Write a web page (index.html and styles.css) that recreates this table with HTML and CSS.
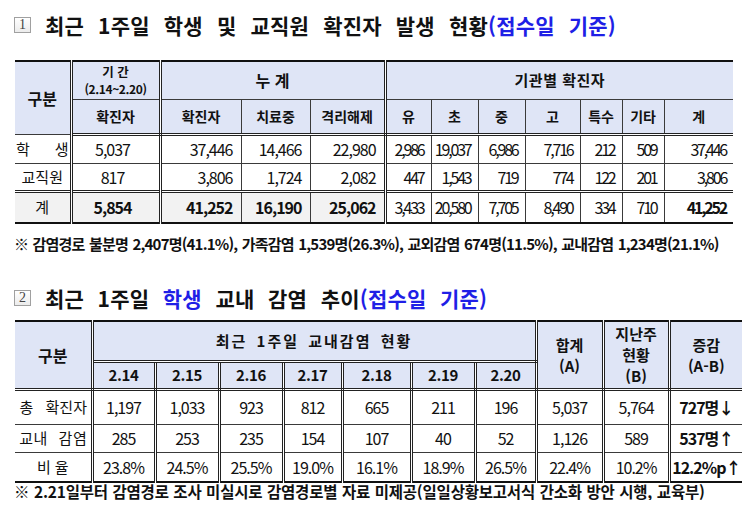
FILE: index.html
```html
<!DOCTYPE html>
<html lang="ko">
<head>
<meta charset="utf-8">
<title>확진자 발생 현황</title>
<link rel="stylesheet" href="styles.css">
</head>
<body>
<div class="page">
  <h2 class="title t1"><span class="numbox">1</span><span class="ttext">최근 1주일 학생 및 교직원 확진자 발생 현황<span class="blue">(접수일 기준)</span></span></h2>

  <table class="tbl tbl1">
    <colgroup>
      <col class="w56"><col class="w89"><col class="w81"><col class="w69"><col class="w75">
      <col class="w46"><col class="w47"><col class="w47"><col class="w55"><col class="w42"><col class="w42"><col class="w69">
    </colgroup>
    <thead>
      <tr class="r-h1">
        <th rowspan="2" class="dr hd-big">구분</th>
        <th class="dr period"><div class="p1">기 간</div><div class="p2">(2.14~2.20)</div></th>
        <th colspan="3" class="dr hd-big">누 계</th>
        <th colspan="7" class="hd-mid">기관별 확진자</th>
      </tr>
      <tr class="r-h2">
        <th class="dr">확진자</th>
        <th>확진자</th><th>치료중</th><th class="dr">격리해제</th>
        <th>유</th><th>초</th><th>중</th><th>고</th><th>특수</th><th>기타</th><th>계</th>
      </tr>
    </thead>
    <tbody>
      <tr class="r-a">
        <td class="dr lbl"><span class="just"><span>학</span><span>생</span></span></td>
        <td class="dr num c">5,037</td>
        <td class="num r">37,446</td><td class="num r">14,466</td><td class="dr num r">22,980</td>
        <td class="num r n">2,986</td><td class="num r n">19,037</td><td class="num r n">6,986</td><td class="num r n">7,716</td><td class="num r n">212</td><td class="num r n">509</td><td class="num r n">37,446</td>
      </tr>
      <tr class="r-b">
        <td class="dr lbl">교직원</td>
        <td class="dr num c">817</td>
        <td class="num r">3,806</td><td class="num r">1,724</td><td class="dr num r">2,082</td>
        <td class="num r n">447</td><td class="num r n">1,543</td><td class="num r n">719</td><td class="num r n">774</td><td class="num r n">122</td><td class="num r n">201</td><td class="num r n">3,806</td>
      </tr>
      <tr class="r-t">
        <td class="dr lbl gray">계</td>
        <td class="dr num c b gray">5,854</td>
        <td class="num r b gray">41,252</td><td class="num r b gray">16,190</td><td class="dr num r b gray">25,062</td>
        <td class="num r n">3,433</td><td class="num r n">20,580</td><td class="num r n">7,705</td><td class="num r n">8,490</td><td class="num r n">334</td><td class="num r n">710</td><td class="num r n b">41,252</td>
      </tr>
    </tbody>
  </table>

  <p class="note note1">※ 감염경로 불분명 2,407명(41.1%), 가족감염 1,539명(26.3%), 교외감염 674명(11.5%), 교내감염 1,234명(21.1%)</p>

  <h2 class="title t2"><span class="numbox">2</span><span class="ttext">최근 1주일 <span class="blue">학생</span> 교내 감염 추이<span class="blue">(접수일 기준)</span></span></h2>

  <table class="tbl tbl2">
    <colgroup>
      <col class="w77"><col class="w63"><col class="w64"><col class="w64"><col class="w59"><col class="w69"><col class="w64"><col class="w61"><col class="w67"><col class="w66"><col class="w73">
    </colgroup>
    <thead>
      <tr class="r2-h1">
        <th rowspan="2" class="hd-big">구분</th>
        <th colspan="7" class="wide">최근 1주일 교내감염 현황</th>
        <th rowspan="2" class="ml">합계<br>(A)</th>
        <th rowspan="2" class="ml ml3">지난주<br>현황<br>(B)</th>
        <th rowspan="2" class="ml">증감<br>(A-B)</th>
      </tr>
      <tr class="r2-h2">
        <th class="dt">2.14</th><th class="dt">2.15</th><th class="dt">2.16</th><th class="dt">2.17</th><th class="dt">2.18</th><th class="dt">2.19</th><th class="dt">2.20</th>
      </tr>
    </thead>
    <tbody>
      <tr class="r2-a">
        <td class="lbl2">총 확진자</td>
        <td class="num">1,197</td><td class="num">1,033</td><td class="num">923</td><td class="num">812</td><td class="num">665</td><td class="num">211</td><td class="num">196</td>
        <td class="num">5,037</td><td class="num">5,764</td><td class="num b">727명↓</td>
      </tr>
      <tr class="r2-b">
        <td class="lbl2 lbl2b">교내 감염</td>
        <td class="num">285</td><td class="num">253</td><td class="num">235</td><td class="num">154</td><td class="num">107</td><td class="num">40</td><td class="num">52</td>
        <td class="num">1,126</td><td class="num">589</td><td class="num b">537명↑</td>
      </tr>
      <tr class="r2-c">
        <td class="lbl2 ratio">비율</td>
        <td class="num">23.8%</td><td class="num">24.5%</td><td class="num">25.5%</td><td class="num">19.0%</td><td class="num">16.1%</td><td class="num">18.9%</td><td class="num">26.5%</td>
        <td class="num">22.4%</td><td class="num">10.2%</td><td class="num b">12.2%p↑</td>
      </tr>
    </tbody>
  </table>

  <p class="note note2">※ 2.21일부터 감염경로 조사 미실시로 감염경로별 자료 미제공(일일상황보고서식 간소화 방안 시행, 교육부)</p>
</div>
</body>
</html>
```

FILE: styles.css
```css
* { box-sizing: border-box; }

body {
  margin: 0;
  background: #ffffff;
  color: #111111;
  font-family: "Noto Sans CJK KR", "Noto Sans", sans-serif;
}

.page {
  width: 745px;
  padding-left: 14px;
}

/* section titles */
.title {
  display: flex;
  align-items: center;
  height: 28px;
  margin: 11px 0 0;
  font-size: 21px;
  font-weight: 700;
  line-height: 28px;
  color: #111;
  white-space: nowrap;
}
.title .ttext { word-spacing: 8px; letter-spacing: 0.2px; }
.t2 { margin-top: 30px; }
.t2 .ttext { word-spacing: 7.5px; }

.numbox {
  display: flex;
  align-items: center;
  justify-content: center;
  width: 17px;
  height: 16px;
  margin-right: 14px;
  border: 1px solid #a0a0a0;
  background: linear-gradient(#ffffff, #ececec);
  font-family: "Liberation Serif", serif;
  font-size: 14px;
  font-weight: 400;
  line-height: 1;
  color: #444;
}

.blue { color: #1f1fe6; }

/* tables */
.tbl {
  margin-left: 1px;
  border-collapse: collapse;
  table-layout: fixed;
  border-top: 2px solid #111;
  border-bottom: 2px solid #111;
  border-left: hidden;
  border-right: hidden;
}
.tbl1 { width: 718px; margin-top: 21px; }
.tbl2 { width: 727px; margin-top: 8px; }

.tbl th,
.tbl td {
  border: 1px solid #3a3a3a;
  padding: 0;
  text-align: center;
  vertical-align: middle;
  white-space: nowrap;
  overflow: hidden;
}

.tbl th {
  background: #dfe5f6;
  font-weight: 700;
  font-size: 14px;
  line-height: 18px;
}

.w42 { width: 42px; } .w46 { width: 46px; } .w47 { width: 47px; }
.w55 { width: 55px; } .w56 { width: 56px; } .w59 { width: 59px; }
.w61 { width: 61px; } .w63 { width: 63px; } .w64 { width: 64px; }
.w66 { width: 66px; } .w67 { width: 67px; } .w69 { width: 69px; }
.w73 { width: 73px; } .w75 { width: 75px; } .w77 { width: 77px; }
.w81 { width: 81px; } .w89 { width: 89px; }

.tbl .dr { border-right: 3px double #222; }

/* table 1 */
.r-h1 { height: 38px; }
.r-h2 { height: 35px; }
.r-h2 th { border-bottom: 3px double #222; }
.r-a { height: 29px; }
.r-b { height: 28px; }
.r-t { height: 32px; }
.r-t td { border-top: 3px double #222; }

.tbl .hd-big { font-size: 16px; }
.tbl .hd-mid { font-size: 15px; letter-spacing: 0.5px; }

.period .p1 { font-size: 12.5px; line-height: 17px; }
.period .p2 { font-size: 12px; line-height: 17px; letter-spacing: -0.4px; }

.tbl td {
  font-size: 15px;
  line-height: 18px;
  font-weight: 400;
}

.tbl .num { font-size: 16px; letter-spacing: -1px; }
.tbl .num.n { letter-spacing: -2.2px; }
.num.c { text-align: center; padding-right: 6px; }
.num.r { text-align: right; padding-right: 8px; }
.num.n.r { padding-right: 7px; }
.tbl .b { font-weight: 700; }
.tbl .gray { background: #f2f2f2; }

.lbl { font-size: 15px; padding: 0 4px; }
.lbl .just {
  display: flex;
  justify-content: space-between;
  padding: 0 1px;
}

/* table 2 */
.r2-h1 { height: 40px; }
.tbl .r2-h1 .wide {
  border-bottom: 3px double #222;
  font-size: 15px;
  letter-spacing: 2px;
  word-spacing: 3px;
}
.r2-h2 { height: 28px; }
.tbl2 thead th { border-bottom: 3px double #222; }
.tbl2 th, .tbl2 td { border-left: 3px double #222; border-right: 3px double #222; }
.tbl .dt { font-size: 15px; letter-spacing: -0.4px; }
.tbl .ml { font-size: 15px; line-height: 21px; }

.r2-a { height: 35px; }
.r2-b { height: 28px; }
.r2-c { height: 30px; }

.tbl .lbl2 { font-size: 15px; word-spacing: 8px; padding-left: 1px; }
.tbl .lbl2b { word-spacing: 6px; letter-spacing: 0.5px; }
.tbl .lbl2.ratio { letter-spacing: 4px; word-spacing: 0; padding-left: 4px; }

/* notes */
.note {
  margin: 0;
  font-size: 15px;
  font-weight: 700;
  white-space: nowrap;
  line-height: 20px;
}
.note1 { margin-top: 10px; letter-spacing: -0.8px; word-spacing: 1px; }
.note2 { margin-top: 0; line-height: 17px; font-size: 15.5px; letter-spacing: -0.2px; word-spacing: 0.5px; }
```
